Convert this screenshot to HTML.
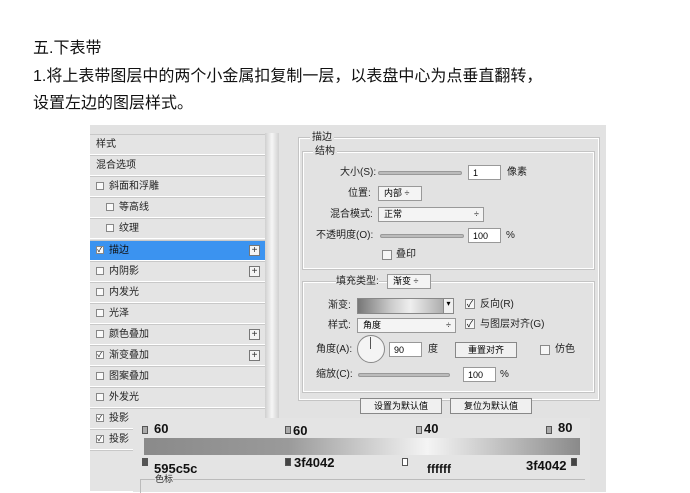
<!DOCTYPE html><html><head><meta charset="utf-8"><style>
*{margin:0;padding:0;box-sizing:border-box}
body{width:690px;height:492px;background:#fff;position:relative;overflow:hidden;font-family:"Liberation Sans","Noto Sans CJK SC",sans-serif;}
.a{position:absolute;white-space:nowrap}
.t{font-size:16px;color:#111;left:33px}
.p{font-size:10px;color:#222;line-height:12px}
.row{position:absolute;left:90px;width:175px;height:21px;border-bottom:1px solid #fff;border-top:1px solid #c8c8c8;background:#e4e4e4;font-size:10px;color:#222;line-height:19px;padding-left:6px}
.cb{display:inline-block;width:8px;height:8px;border:1px solid #888;background:#fafafa;margin-right:5px;vertical-align:-1px;font-size:8px;line-height:6px;overflow:hidden;text-align:center}
.plus{position:absolute;right:5px;top:4px;width:11px;height:11px;border:1px solid #777;background:#f4f4f4;font-size:10px;line-height:9px;text-align:center;color:#333}
.box{position:absolute;border:1px solid #fff;outline:1px solid #c4c4c4}
.in{position:absolute;background:#fff;border:1px solid #999;font-size:9px;padding-left:4px;line-height:14px;height:15px}
.sel{position:absolute;background:#f4f4f4;border:1px solid #999;font-size:9px;padding-left:5px;line-height:13px;height:15px}
.sl{position:absolute;height:4px;background:#bbb;border:1px solid #999;border-radius:2px}
.btn{position:absolute;background:#f0f0f0;border:1px solid #888;font-size:9px;text-align:center;line-height:14px;height:16px}
.lb{position:absolute;font:bold 13px "Liberation Sans",sans-serif;color:#111}
.mk{position:absolute;width:6px;height:8px;background:#888;border:1px solid #555}
.ck{position:absolute;width:10px;height:10px;border:1px solid #888;background:#f6f6f6;font-size:9px;line-height:8px;text-align:center}
</style></head><body>
<div class="a t" style="top:34px">五.下表带</div>
<div class="a t" style="top:62px">1.将上表带图层中的两个小金属扣复制一层，以表盘中心为点垂直翻转，</div>
<div class="a t" style="top:89px">设置左边的图层样式。</div>

<div class="a" style="left:90px;top:125px;width:516px;height:367px;background:#e2e2e2"></div>
<div class="a" style="left:265px;top:133px;width:14px;height:359px;background:linear-gradient(90deg,#d0d0d0,#f6f6f6,#d0d0d0)"></div>

<div class="row" style="top:134px">样式</div>
<div class="row" style="top:155px">混合选项</div>
<div class="row" style="top:176px"><span class="cb"></span>斜面和浮雕</div>
<div class="row" style="top:197px;padding-left:16px"><span class="cb"></span>等高线</div>
<div class="row" style="top:218px;padding-left:16px"><span class="cb"></span>纹理</div>
<div class="row" style="top:240px;background:#3b93f0;color:#111"><span class="cb">✓</span>描边<div class="plus">+</div></div>
<div class="row" style="top:261px"><span class="cb"></span>内阴影<div class="plus">+</div></div>
<div class="row" style="top:282px"><span class="cb"></span>内发光</div>
<div class="row" style="top:303px"><span class="cb"></span>光泽</div>
<div class="row" style="top:324px"><span class="cb"></span>颜色叠加<div class="plus">+</div></div>
<div class="row" style="top:345px"><span class="cb">✓</span>渐变叠加<div class="plus">+</div></div>
<div class="row" style="top:366px"><span class="cb"></span>图案叠加</div>
<div class="row" style="top:387px"><span class="cb"></span>外发光</div>
<div class="row" style="top:408px"><span class="cb">✓</span>投影</div>
<div class="row" style="top:429px"><span class="cb">✓</span>投影</div>
<div class="row" style="top:450px;height:42px"></div>

<div class="box" style="left:299px;top:138px;width:300px;height:262px"></div>
<div class="a p" style="left:310px;top:132px;background:#e2e2e2;padding:0 2px">描边</div>
<div class="box" style="left:303px;top:152px;width:291px;height:117px"></div>
<div class="a p" style="left:313px;top:146px;background:#e2e2e2;padding:0 2px">结构</div>
<div class="a p" style="left:340px;top:167px">大小(S):</div>
<div class="sl" style="left:378px;top:171px;width:84px"></div>
<div class="in" style="left:468px;top:165px;width:33px">1</div>
<div class="a p" style="left:507px;top:167px">像素</div>
<div class="a p" style="left:348px;top:188px">位置:</div>
<div class="sel" style="left:378px;top:186px;width:44px">内部 ÷</div>
<div class="a p" style="left:330px;top:209px">混合模式:</div>
<div class="sel" style="left:378px;top:207px;width:106px">正常<span style="float:right;margin-right:4px">÷</span></div>
<div class="a p" style="left:316px;top:230px">不透明度(O):</div>
<div class="sl" style="left:380px;top:234px;width:84px"></div>
<div class="in" style="left:468px;top:228px;width:33px">100</div>
<div class="a p" style="left:506px;top:230px">%</div>
<div class="ck" style="left:382px;top:250px"></div>
<div class="a p" style="left:396px;top:249px">叠印</div>

<div class="box" style="left:303px;top:282px;width:291px;height:110px"></div>
<div class="a p" style="left:336px;top:276px;background:#e2e2e2">填充类型:</div>
<div class="sel" style="left:387px;top:274px;width:44px">渐变 ÷</div>
<div class="a p" style="left:328px;top:300px">渐变:</div>
<div class="a" style="left:357px;top:298px;width:97px;height:16px;border:1px solid #888;background:linear-gradient(90deg,#777,#ccc 35%,#eee 55%,#999)"></div>
<div class="a" style="left:443px;top:298px;width:11px;height:16px;background:#f0f0f0;border:1px solid #888;font-size:8px;text-align:center">▾</div>
<div class="ck" style="left:465px;top:299px">✓</div>
<div class="a p" style="left:480px;top:299px">反向(R)</div>
<div class="a p" style="left:328px;top:320px">样式:</div>
<div class="sel" style="left:357px;top:318px;width:99px">角度<span style="float:right;margin-right:4px">÷</span></div>
<div class="ck" style="left:465px;top:319px">✓</div>
<div class="a p" style="left:480px;top:319px">与图层对齐(G)</div>
<div class="a p" style="left:316px;top:344px">角度(A):</div>
<div class="a" style="left:357px;top:335px;width:28px;height:28px;border:1px solid #888;border-radius:50%;background:#f4f4f4"></div>
<div class="a" style="left:370px;top:337px;width:1px;height:12px;background:#555"></div>
<div class="in" style="left:389px;top:342px;width:33px">90</div>
<div class="a p" style="left:428px;top:344px">度</div>
<div class="btn" style="left:455px;top:342px;width:62px">重置对齐</div>
<div class="ck" style="left:540px;top:345px"></div>
<div class="a p" style="left:555px;top:344px">仿色</div>
<div class="a p" style="left:316px;top:369px">缩放(C):</div>
<div class="sl" style="left:358px;top:373px;width:92px"></div>
<div class="in" style="left:463px;top:367px;width:33px">100</div>
<div class="a p" style="left:500px;top:369px">%</div>
<div class="btn" style="left:360px;top:398px;width:82px">设置为默认值</div>
<div class="btn" style="left:450px;top:398px;width:82px">复位为默认值</div>

<div class="a" style="left:133px;top:418px;width:457px;height:74px;background:#e4e4e4"></div>
<div class="a" style="left:144px;top:438px;width:436px;height:17px;background:linear-gradient(90deg,#8a8a8a,#9a9a9a 33%,#f4f4f4 65%,#8a8a8a)"></div>
<div class="mk" style="left:142px;top:426px;background:#aaa"></div><div class="lb" style="left:154px;top:421px">60</div>
<div class="mk" style="left:285px;top:426px;background:#aaa"></div><div class="lb" style="left:293px;top:423px">60</div>
<div class="mk" style="left:416px;top:426px;background:#bbb"></div><div class="lb" style="left:424px;top:421px">40</div>
<div class="mk" style="left:546px;top:426px;background:#aaa"></div><div class="lb" style="left:558px;top:420px">80</div>
<div class="mk" style="left:142px;top:458px;background:#555"></div><div class="lb" style="left:154px;top:461px">595c5c</div>
<div class="mk" style="left:285px;top:458px;background:#444"></div><div class="lb" style="left:294px;top:455px">3f4042</div>
<div class="mk" style="left:402px;top:458px;background:#fff"></div><div class="lb" style="left:427px;top:462px;font-size:12px">ffffff</div>
<div class="mk" style="left:571px;top:458px;background:#444"></div><div class="lb" style="left:526px;top:458px">3f4042</div>
<div class="a" style="left:140px;top:479px;width:445px;height:14px;border-top:1px solid #bbb;border-left:1px solid #bbb"></div>
<div class="a p" style="left:155px;top:473px;background:#e4e4e4;font-size:9px">色标</div>
</body></html>
